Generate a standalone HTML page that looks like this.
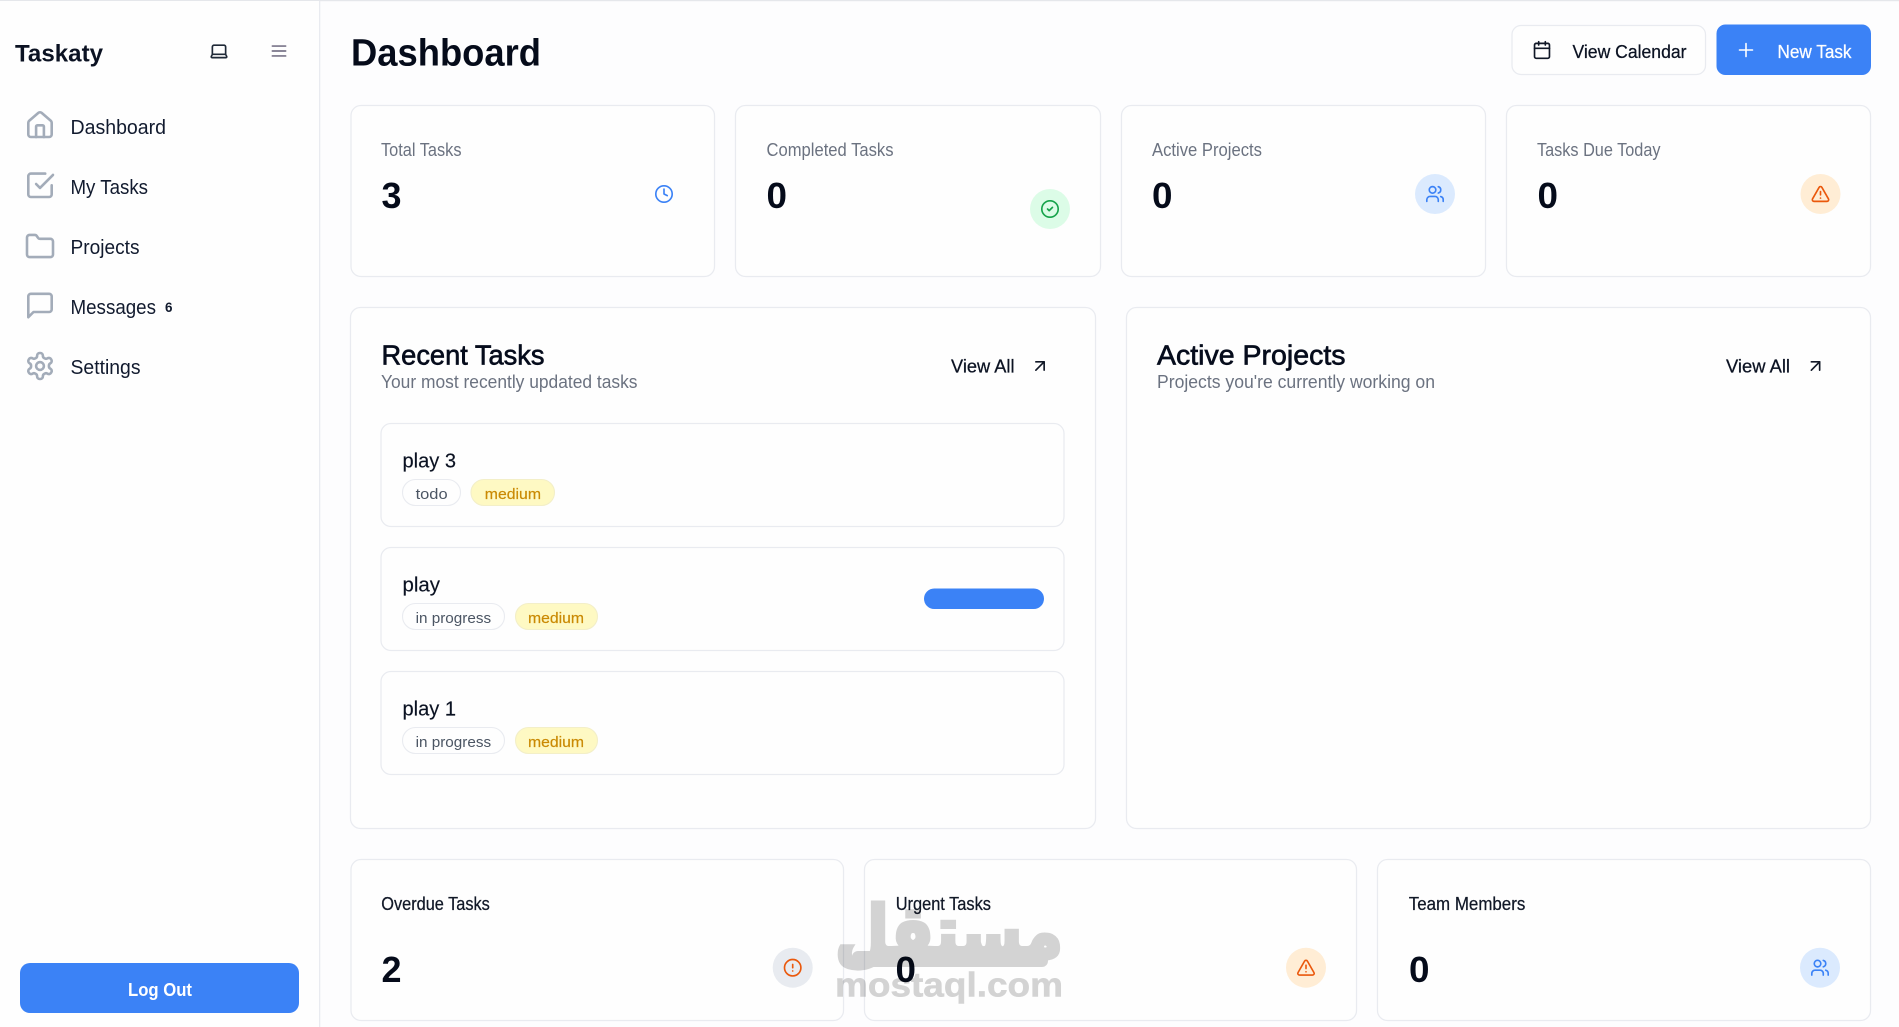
<!DOCTYPE html>
<html lang="en"><head><meta charset="utf-8"><title>Taskaty Dashboard</title>
<style>
html,body{margin:0;padding:0;width:1899px;height:1027px;overflow:hidden;background:#fdfdfe}
svg{display:block;position:absolute;left:0;top:0}
text{font-family:"Liberation Sans",sans-serif;white-space:pre}
.card{fill:#fefefe;stroke:#e9ebf0;stroke-width:1.25}
.nav{font-size:20px;fill:#111a2e}
.lab{font-size:18px;fill:#6b7280}
.lab2{font-size:18px;fill:#111827;stroke:#111827;stroke-width:.25}
.num{font-size:36px;font-weight:bold;fill:#050b1a}
.h2{font-size:28px;fill:#060c1c;stroke:#060c1c;stroke-width:.65}
.sub{font-size:18px;fill:#6b7280}
.btn{font-size:18px;fill:#0b1222;stroke:#0b1222;stroke-width:.25}
.t{font-size:20px;fill:#0b1222;stroke:#0b1222;stroke-width:.15}
.pill{fill:#fefefe;stroke:#e9ebf0;stroke-width:1.1}
.pt{font-size:15px;fill:#4b5563}
.py{fill:#fef9c3;stroke:#f3efc8;stroke-width:1.1}
.pm{font-size:15px;fill:#ca8a04;stroke:#ca8a04;stroke-width:.2}
.ic{fill:none;stroke-linecap:round;stroke-linejoin:round;stroke-width:2}
.navic{stroke:#a3acb9;stroke-width:2}
</style></head><body>
<svg width="1899" height="1027" viewBox="0 0 1899 1027" xmlns="http://www.w3.org/2000/svg">
<defs>
<g id="users"><path d="M16 21v-2a4 4 0 0 0-4-4H6a4 4 0 0 0-4 4v2"/><circle cx="9" cy="7" r="4"/><path d="M22 21v-2a4 4 0 0 0-3-3.87"/><path d="M16 3.13a4 4 0 0 1 0 7.75"/></g>
<g id="tri"><path d="m21.73 18-8-14a2 2 0 0 0-3.48 0l-8 14A2 2 0 0 0 4 21h16a2 2 0 0 0 1.73-3"/><path d="M12 9v4"/><path d="M12 17h.01"/></g>
<g id="arrow"><path d="M7 7h10v10"/><path d="M7 17 17 7"/></g>
</defs>
<rect width="1899" height="1027" fill="#fdfdfe"/>
<rect x="0" y="0" width="1899" height="1.2" fill="#e5e7eb"/>

<!-- Sidebar -->
<rect x="0" y="1" width="319" height="1026" fill="#fefefe"/>
<rect x="319" y="1" width="1.3" height="1026" fill="#e9ebf0"/>
<text x="15" y="61.5" font-size="24" font-weight="bold" fill="#0b1222" textLength="88" lengthAdjust="spacingAndGlyphs">Taskaty</text>
<g class="ic" stroke="#1f2937" transform="translate(219 51) scale(.83) translate(-12 -12)"><path d="M20 16V7a2 2 0 0 0-2-2H6a2 2 0 0 0-2 2v9m16 0H4m16 0 1.28 2.55a1 1 0 0 1-.9 1.45H3.62a1 1 0 0 1-.9-1.45L4 16"/></g>
<g class="ic" stroke="#7a7589" transform="translate(279 51) scale(.83) translate(-12 -12)"><path d="M4 6h16M4 12h16M4 18h16"/></g>

<g class="ic navic" transform="translate(40 125.3) scale(1.3) translate(-12 -12)"><path d="M15 21v-8a1 1 0 0 0-1-1h-4a1 1 0 0 0-1 1v8"/><path d="M3 10a2 2 0 0 1 .709-1.528l7-5.999a2 2 0 0 1 2.582 0l7 5.999A2 2 0 0 1 21 10v9a2 2 0 0 1-2 2H5a2 2 0 0 1-2-2z"/></g>
<text class="nav" x="70.5" y="134" textLength="95.5" lengthAdjust="spacingAndGlyphs">Dashboard</text>
<g class="ic navic" transform="translate(40 185.3) scale(1.3) translate(-12 -12)"><path d="M9 11l3 3L22 4"/><path d="M21 12v7a2 2 0 0 1-2 2H5a2 2 0 0 1-2-2V5a2 2 0 0 1 2-2h11"/></g>
<text class="nav" x="70.5" y="194" textLength="77.5" lengthAdjust="spacingAndGlyphs">My Tasks</text>
<g class="ic navic" transform="translate(40 246) scale(1.3) translate(-12 -11.5)"><path d="M20 20a2 2 0 0 0 2-2V8a2 2 0 0 0-2-2h-7.9a2 2 0 0 1-1.69-.9L9.6 3.9A2 2 0 0 0 7.93 3H4a2 2 0 0 0-2 2v13a2 2 0 0 0 2 2Z"/></g>
<text class="nav" x="70.5" y="254" textLength="69" lengthAdjust="spacingAndGlyphs">Projects</text>
<g class="ic navic" transform="translate(40 305.5) scale(1.3) translate(-12 -12)"><path d="M21 15a2 2 0 0 1-2 2H7l-4 4V5a2 2 0 0 1 2-2h14a2 2 0 0 1 2 2z"/></g>
<text class="nav" x="70.5" y="314" textLength="85.5" lengthAdjust="spacingAndGlyphs">Messages</text>
<text x="165" y="312" font-size="14" font-weight="bold" fill="#111a2e" textLength="7.5" lengthAdjust="spacingAndGlyphs">6</text>
<g class="ic navic" transform="translate(40 366) scale(1.3) translate(-12 -12)"><path d="M12.22 2h-.44a2 2 0 0 0-2 2v.18a2 2 0 0 1-1 1.73l-.43.25a2 2 0 0 1-2 0l-.15-.08a2 2 0 0 0-2.73.73l-.22.38a2 2 0 0 0 .73 2.73l.15.1a2 2 0 0 1 1 1.72v.51a2 2 0 0 1-1 1.74l-.15.09a2 2 0 0 0-.73 2.73l.22.38a2 2 0 0 0 2.73.73l.15-.08a2 2 0 0 1 2 0l.43.25a2 2 0 0 1 1 1.73V20a2 2 0 0 0 2 2h.44a2 2 0 0 0 2-2v-.18a2 2 0 0 1 1-1.73l.43-.25a2 2 0 0 1 2 0l.15.08a2 2 0 0 0 2.73-.73l.22-.39a2 2 0 0 0-.73-2.73l-.15-.08a2 2 0 0 1-1-1.74v-.5a2 2 0 0 1 1-1.74l.15-.09a2 2 0 0 0 .73-2.73l-.22-.38a2 2 0 0 0-2.73-.73l-.15.08a2 2 0 0 1-2 0l-.43-.25a2 2 0 0 1-1-1.73V4a2 2 0 0 0-2-2z"/><circle cx="12" cy="12" r="3"/></g>
<text class="nav" x="70.5" y="374" textLength="70" lengthAdjust="spacingAndGlyphs">Settings</text>

<rect x="20" y="963" width="279" height="50" rx="10" fill="#3b82f6"/>
<text x="128" y="996" font-size="18" font-weight="bold" fill="#fff" textLength="64" lengthAdjust="spacingAndGlyphs">Log Out</text>

<!-- Header -->
<text x="351" y="65.5" font-size="38" font-weight="bold" fill="#050b1a" textLength="190" lengthAdjust="spacingAndGlyphs">Dashboard</text>
<rect class="card" x="1512" y="25.5" width="193.5" height="49" rx="9"/>
<g class="ic" stroke="#111827" transform="translate(1542 50) scale(.83) translate(-12 -12)"><path d="M8 2v4"/><path d="M16 2v4"/><rect x="3" y="4" width="18" height="18" rx="2"/><path d="M3 10h18"/></g>
<text class="btn" x="1572.5" y="58" textLength="114" lengthAdjust="spacingAndGlyphs">View Calendar</text>
<rect x="1716.5" y="24.5" width="154.5" height="50.5" rx="9" fill="#3b82f6"/>
<path d="M1746 43.5v13M1739.5 50h13" stroke="#fff" stroke-width="1.6" stroke-linecap="round" fill="none"/>
<text x="1777.5" y="58" font-size="18" fill="#fff" stroke="#fff" stroke-width=".25" textLength="74" lengthAdjust="spacingAndGlyphs">New Task</text>

<!-- Top stat cards -->
<rect class="card" x="351" y="105.5" width="363.5" height="171" rx="10"/>
<rect class="card" x="735.5" y="105.5" width="365" height="171" rx="10"/>
<rect class="card" x="1121.5" y="105.5" width="364" height="171" rx="10"/>
<rect class="card" x="1506.5" y="105.5" width="364" height="171" rx="10"/>

<text class="lab" x="381" y="156" textLength="80.5" lengthAdjust="spacingAndGlyphs">Total Tasks</text>
<text class="num" x="381.5" y="208" textLength="20" lengthAdjust="spacingAndGlyphs">3</text>
<g class="ic" stroke="#3b82f6" transform="translate(664 194) scale(.82) translate(-12 -12)"><circle cx="12" cy="12" r="10"/><path d="M12 6v6l4 2"/></g>

<text class="lab" x="766.5" y="156" textLength="127" lengthAdjust="spacingAndGlyphs">Completed Tasks</text>
<text class="num" x="766.5" y="208" textLength="20.5" lengthAdjust="spacingAndGlyphs">0</text>
<circle cx="1050" cy="209" r="20" fill="#dcfce7"/>
<g class="ic" stroke="#16a34a" transform="translate(1050 209) scale(.82) translate(-12 -12)"><circle cx="12" cy="12" r="10"/><path d="m9 12 2 2 4-4"/></g>

<text class="lab" x="1152" y="156" textLength="110" lengthAdjust="spacingAndGlyphs">Active Projects</text>
<text class="num" x="1152" y="208" textLength="20.5" lengthAdjust="spacingAndGlyphs">0</text>
<circle cx="1435" cy="194" r="20" fill="#dbeafe"/>
<use href="#users" class="ic" stroke="#3b82f6" transform="translate(1435 194) scale(.82) translate(-12 -12)"/>

<text class="lab" x="1537" y="156" textLength="123.5" lengthAdjust="spacingAndGlyphs">Tasks Due Today</text>
<text class="num" x="1537.5" y="208" textLength="20.5" lengthAdjust="spacingAndGlyphs">0</text>
<circle cx="1820.5" cy="194" r="20" fill="#ffedd5"/>
<use href="#tri" class="ic" stroke="#ea580c" transform="translate(1820.5 194) scale(.82) translate(-12 -12)"/>

<!-- Recent Tasks -->
<rect class="card" x="350.5" y="307.5" width="745" height="521" rx="10"/>
<text class="h2" x="381.5" y="364.5" textLength="163" lengthAdjust="spacingAndGlyphs">Recent Tasks</text>
<text class="sub" x="381" y="388" textLength="256.5" lengthAdjust="spacingAndGlyphs">Your most recently updated tasks</text>
<text class="btn" x="951" y="372.7" textLength="63.5" lengthAdjust="spacingAndGlyphs">View All</text>
<use href="#arrow" class="ic" stroke="#111827" transform="translate(1040 366) scale(.83) translate(-12 -12)"/>

<rect class="card" x="381" y="423.5" width="683" height="103" rx="10"/>
<text class="t" x="402.5" y="467.4" textLength="53.5" lengthAdjust="spacingAndGlyphs">play 3</text>
<rect class="pill" x="402.5" y="479.5" width="58" height="26" rx="13"/>
<text class="pt" x="415.6" y="499" textLength="32" lengthAdjust="spacingAndGlyphs">todo</text>
<rect class="py" x="471" y="479.5" width="83.5" height="26" rx="13"/>
<text class="pm" x="484.8" y="499" textLength="56.2" lengthAdjust="spacingAndGlyphs">medium</text>

<rect class="card" x="381" y="547.5" width="683" height="103" rx="10"/>
<text class="t" x="402.5" y="591.4" textLength="37.5" lengthAdjust="spacingAndGlyphs">play</text>
<rect class="pill" x="402.5" y="603.5" width="102" height="26" rx="13"/>
<text class="pt" x="415.6" y="623" textLength="75.5" lengthAdjust="spacingAndGlyphs">in progress</text>
<rect class="py" x="515.5" y="603.5" width="82" height="26" rx="13"/>
<text class="pm" x="528" y="623" textLength="56" lengthAdjust="spacingAndGlyphs">medium</text>
<rect x="924" y="588.5" width="120" height="20.5" rx="10.2" fill="#3b82f6"/>

<rect class="card" x="381" y="671.5" width="683" height="103" rx="10"/>
<text class="t" x="402.5" y="715.4" textLength="53.5" lengthAdjust="spacingAndGlyphs">play 1</text>
<rect class="pill" x="402.5" y="727.5" width="102" height="26" rx="13"/>
<text class="pt" x="415.6" y="747" textLength="75.5" lengthAdjust="spacingAndGlyphs">in progress</text>
<rect class="py" x="515.5" y="727.5" width="82" height="26" rx="13"/>
<text class="pm" x="528" y="747" textLength="56" lengthAdjust="spacingAndGlyphs">medium</text>

<!-- Active Projects -->
<rect class="card" x="1126.5" y="307.5" width="744" height="521" rx="10"/>
<text class="h2" x="1157" y="364.7" textLength="188.5" lengthAdjust="spacingAndGlyphs">Active Projects</text>
<text class="sub" x="1157" y="388" textLength="278" lengthAdjust="spacingAndGlyphs">Projects you're currently working on</text>
<text class="btn" x="1726" y="372.7" textLength="64" lengthAdjust="spacingAndGlyphs">View All</text>
<use href="#arrow" class="ic" stroke="#111827" transform="translate(1815.5 366) scale(.83) translate(-12 -12)"/>

<!-- Bottom stat cards -->
<rect class="card" x="351" y="859.5" width="492.5" height="161" rx="10"/>
<rect class="card" x="864.5" y="859.5" width="492" height="161" rx="10"/>
<rect class="card" x="1377.5" y="859.5" width="493" height="161" rx="10"/>

<text class="lab2" x="381.3" y="910" textLength="108.5" lengthAdjust="spacingAndGlyphs">Overdue Tasks</text>
<text class="num" x="381.5" y="982" textLength="20" lengthAdjust="spacingAndGlyphs">2</text>
<circle cx="792.7" cy="967.7" r="20" fill="#e8ebf0"/>
<g class="ic" stroke="#ea580c" transform="translate(792.7 967.7) scale(.82) translate(-12 -12)"><circle cx="12" cy="12" r="10"/><path d="M12 8v4"/><path d="M12 16h.01"/></g>

<text class="lab2" x="895.7" y="910" textLength="95.3" lengthAdjust="spacingAndGlyphs">Urgent Tasks</text>
<text class="num" x="895.5" y="982" textLength="20.5" lengthAdjust="spacingAndGlyphs">0</text>
<circle cx="1306" cy="967.7" r="20" fill="#ffedd5"/>
<use href="#tri" class="ic" stroke="#ea580c" transform="translate(1306 967.7) scale(.82) translate(-12 -12)"/>

<text class="lab2" x="1408.8" y="910" textLength="116.5" lengthAdjust="spacingAndGlyphs">Team Members</text>
<text class="num" x="1409" y="982" textLength="20.5" lengthAdjust="spacingAndGlyphs">0</text>
<circle cx="1820" cy="967.7" r="20" fill="#dbeafe"/>
<use href="#users" class="ic" stroke="#3b82f6" transform="translate(1820 967.7) scale(.82) translate(-12 -12)"/>

<!-- Watermark -->
<g opacity=".165">
<text x="835" y="957" style="font-family:'DejaVu Sans',sans-serif;direction:rtl" text-anchor="end" font-size="72" font-weight="bold" fill="#000" stroke="#000" stroke-width="4" textLength="228" lengthAdjust="spacingAndGlyphs">مستقل</text>
<rect x="852" y="951" width="196" height="16" rx="6" fill="#000"/>
<text x="835" y="996.7" font-size="34" font-weight="bold" fill="#000" stroke="#000" stroke-width=".6" textLength="228" lengthAdjust="spacingAndGlyphs">mostaql.com</text>
</g>
</svg>
</body></html>
